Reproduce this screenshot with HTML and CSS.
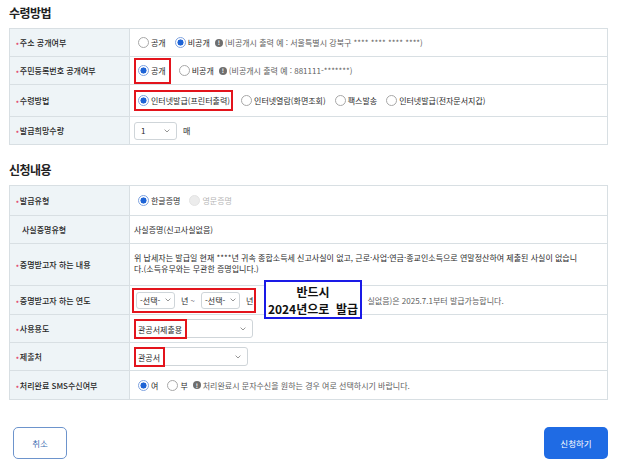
FILE: index.html
```html
<!DOCTYPE html>
<html lang="ko">
  <head>
    <meta charset="UTF-8" />
    <meta name="viewport" content="width=device-width, initial-scale=1.0" />
    <title>사실증명 신청</title>
    <link rel="stylesheet" href="styles.css">
  </head>
  <body>
    <div class="wrap">
      <!-- 수령방법 -->
      <h2 class="sec-title">수령방법</h2>
      <table class="form-table">
        <colgroup><col class="col-label"><col></colgroup>
        <tr class="r28">
          <th><span class="req">주소 공개여부</span></th>
          <td>
            <div class="cell">
              <label class="radio"><input type="radio" name="addr"> 공개</label>
              <label class="radio"><input type="radio" name="addr" checked> 비공개</label>
              <span class="hint"><i class="info">!</i>(비공개시 출력 예 : 서울특별시 강북구 **** **** **** ****)</span>
            </div>
          </td>
        </tr>
        <tr class="r28">
          <th><span class="req">주민등록번호 공개여부</span></th>
          <td>
            <div class="cell">
              <label class="radio mark-opt tall"><input type="radio" name="jumin" checked> 공개</label>
              <label class="radio"><input type="radio" name="jumin"> 비공개</label>
              <span class="hint"><i class="info">!</i>(비공개시 출력 예 : 881111-*******)</span>
            </div>
          </td>
        </tr>
        <tr class="r32">
          <th><span class="req">수령방법</span></th>
          <td>
            <div class="cell">
              <label class="radio mark-opt"><input type="radio" name="recv" checked> 인터넷발급(프린터출력)</label>
              <label class="radio"><input type="radio" name="recv"> 인터넷열람(화면조회)</label>
              <label class="radio"><input type="radio" name="recv"> 팩스발송</label>
              <label class="radio"><input type="radio" name="recv"> 인터넷발급(전자문서지갑)</label>
            </div>
          </td>
        </tr>
        <tr class="r28">
          <th><span class="req">발급희망수량</span></th>
          <td>
            <div class="cell">
              <span class="select w-qty"><span class="val">1</span><svg class="chev" width="6" height="4" viewBox="0 0 6 4"><path d="M0.6 0.6 L3 3 L5.4 0.6" fill="none" stroke="#8a8a8a" stroke-width="0.9"/></svg></span>
              <span class="unit">매</span>
            </div>
          </td>
        </tr>
      </table>

      <!-- 신청내용 -->
      <h2 class="sec-title next">신청내용</h2>
      <table class="form-table">
        <colgroup><col class="col-label"><col></colgroup>
        <tr class="r30">
          <th><span class="req">발급유형</span></th>
          <td>
            <div class="cell">
              <label class="radio"><input type="radio" name="lang" checked> 한글증명</label>
              <label class="radio off"><input type="radio" name="lang" disabled> 영문증명</label>
            </div>
          </td>
        </tr>
        <tr class="r28">
          <th><span class="plain">사실증명유형</span></th>
          <td><div class="cell">사실증명(신고사실없음)</div></td>
        </tr>
        <tr class="r42">
          <th><span class="req">증명받고자 하는 내용</span></th>
          <td>
            <p class="desc">위 납세자는 발급일 현재 ****년 귀속 종합소득세 신고사실이 없고, 근로·사업·연금·종교인소득으로 연말정산하여 제출된 사실이 없습니<br>다.(소득유무와는 무관한 증명입니다.)</p>
          </td>
        </tr>
        <tr class="r29">
          <th><span class="req">증명받고자 하는 연도</span></th>
          <td class="year-cell">
            <div class="cell">
              <span class="mark-group">
                <span class="select w-year"><span class="val">-선택-</span><svg class="chev" width="6" height="4" viewBox="0 0 6 4"><path d="M0.6 0.6 L3 3 L5.4 0.6" fill="none" stroke="#8a8a8a" stroke-width="0.9"/></svg></span>
                <span>년 ~</span>
                <span class="select w-year"><span class="val">-선택-</span><svg class="chev" width="6" height="4" viewBox="0 0 6 4"><path d="M0.6 0.6 L3 3 L5.4 0.6" fill="none" stroke="#8a8a8a" stroke-width="0.9"/></svg></span>
                <span>년</span>
              </span>
              <span class="hint year-hint">실없음)은 2025.7.1부터 발급가능합니다.</span>
            </div>
            <div class="note">반드시<br>2024년으로&nbsp; 발급</div>
          </td>
        </tr>
        <tr class="r28">
          <th><span class="req">사용용도</span></th>
          <td>
            <div class="cell">
              <span class="select w-use"><span class="val marked">관공서제출용</span><svg class="chev" width="6" height="4" viewBox="0 0 6 4"><path d="M0.6 0.6 L3 3 L5.4 0.6" fill="none" stroke="#8a8a8a" stroke-width="0.9"/></svg></span>
            </div>
          </td>
        </tr>
        <tr class="r28">
          <th><span class="req">제출처</span></th>
          <td>
            <div class="cell">
              <span class="select w-dest"><span class="val marked">관공서</span><svg class="chev" width="6" height="4" viewBox="0 0 6 4"><path d="M0.6 0.6 L3 3 L5.4 0.6" fill="none" stroke="#8a8a8a" stroke-width="0.9"/></svg></span>
            </div>
          </td>
        </tr>
        <tr class="r29">
          <th><span class="req">처리완료 SMS수신여부</span></th>
          <td>
            <div class="cell">
              <label class="radio"><input type="radio" name="sms" checked> 여</label>
              <label class="radio"><input type="radio" name="sms"> 부</label>
              <span class="hint"><i class="info">!</i>처리완료시 문자수신을 원하는 경우 여로 선택하시기 바랍니다.</span>
            </div>
          </td>
        </tr>
      </table>

      <!-- 버튼 -->
      <div class="btns">
        <button class="btn btn-cancel">취소</button>
        <button class="btn btn-submit">신청하기</button>
      </div>
    </div>
  </body>
</html>
```

FILE: styles.css
```css
/* 기본 */
body {
  margin: 0;
  background: #fff;
  color: #2a2a2a;
  font-family: "Noto Sans CJK KR", "Noto Sans", sans-serif;
  font-size: 8px;
}

.wrap {
  width: 599px;
  padding-left: 9px;
}

/* 섹션 제목 */
.sec-title {
  margin: 0;
  height: 28px;
  line-height: 26px;
  font-size: 12px;
  font-weight: 700;
  letter-spacing: -0.5px;
  color: #222;
}

.sec-title.next {
  margin-top: 12px;
}

/* 입력 표 */
.form-table {
  width: 100%;
  border-collapse: collapse;
  table-layout: fixed;
}

.form-table .col-label {
  width: 120px;
}

.form-table th,
.form-table td {
  border: 1px solid #d8dfe3;
  padding: 0;
}

.form-table th {
  background: #eef4f7;
  text-align: left;
  font-weight: 500;
  color: #262626;
  padding-left: 6px;
}

.form-table td {
  padding-left: 4px;
  background: #fff;
}

.r28 td { height: 27px; }
.r29 td { height: 28px; }
.r30 td { height: 29px; }
.r32 td { height: 31px; }
.r42 td { height: 41px; }

/* 필수 표시 */
.req::before {
  content: "•";
  color: #e2567a;
  margin-right: 1px;
}

.plain {
  padding-left: 6px;
}

.cell {
  display: flex;
  align-items: center;
}

/* 라디오 */
.radio {
  display: inline-flex;
  align-items: center;
  margin-left: 4px;
  margin-right: 5px;
  white-space: nowrap;
}

.radio input {
  appearance: none;
  width: 11px;
  height: 11px;
  margin: 0 2px 0 0;
  border: 1px solid #a8a8a8;
  border-radius: 50%;
  background: #fff;
  box-sizing: border-box;
}

.radio input:checked {
  border-color: #7fa3e0;
  background: radial-gradient(circle, #1d63d6 0 2.8px, #fff 3.3px);
}

.radio.off {
  color: #b5b5b5;
}

.radio.off input {
  background: #ececec;
  border-color: #e4e4e4;
}

/* 빨간 표시 박스 */
.mark-opt {
  margin-left: 0;
  margin-right: 4px;
  padding: 0 1px 0 2px;
  border: 2px solid #e3141c;
  height: 21px;
  box-sizing: border-box;
}

.mark-opt.tall {
  height: 26px;
  padding-right: 3px;
}

.mark-group {
  display: inline-flex;
  align-items: center;
  gap: 6px;
  margin-left: -2px;
  padding: 2px 1px 2px 2px;
  border: 2px solid #e3141c;
}

/* 안내 문구 */
.hint {
  display: inline-flex;
  align-items: center;
  color: #5e5e5e;
  white-space: nowrap;
}

.info {
  display: inline-flex;
  justify-content: center;
  align-items: center;
  width: 8px;
  height: 8px;
  margin-right: 2px;
  border-radius: 50%;
  background: #6e6e6e;
  color: #fff;
  font-size: 6px;
  font-style: normal;
  font-weight: 700;
}

.year-hint {
  margin-left: 111px;
}

/* 셀렉트 */
.select {
  display: inline-flex;
  align-items: center;
  height: 18px;
  padding: 0 6px 0 4px;
  border: 1px solid #cfd5d9;
  border-radius: 3px;
  background: #fff;
  box-sizing: border-box;
}

.select .chev {
  margin-left: auto;
}

.select .val.marked {
  align-self: stretch;
  display: inline-flex;
  align-items: center;
  margin: -1px 0 -2px -5px;
  padding: 0 3px 0 2px;
  border: 2px solid #e3141c;
}

.w-qty { width: 43px; padding-left: 6px; }
.w-year { width: 39px; height: 17px; padding: 0 3px 0 3px; }
.w-use { width: 119px; height: 19px; }
.w-dest { width: 114px; height: 19px; }

.unit {
  margin-left: 6px;
}

/* 내용 설명 */
.desc {
  margin: 0;
  line-height: 11.5px;
  padding-bottom: 3px;
}

/* 파란 메모 박스 */
.year-cell {
  position: relative;
}

.note {
  position: absolute;
  left: 134px;
  top: -6px;
  width: 98px;
  height: 39px;
  box-sizing: border-box;
  border: 2px solid #1a1ae6;
  background: #fff;
  color: #111;
  font-size: 12px;
  font-weight: 700;
  line-height: 17px;
  text-align: center;
  padding-top: 1px;
}

/* 버튼 */
.btns {
  display: flex;
  justify-content: space-between;
  margin-top: 27px;
  padding-left: 4px;
}

.btn {
  height: 32px;
  border-radius: 5px;
  font-family: inherit;
  font-size: 8.5px;
  cursor: pointer;
}

.btn-cancel {
  width: 54px;
  border: 1px solid #6d94cc;
  background: #fff;
  color: #3f6fb3;
}

.btn-submit {
  width: 64px;
  border: 0;
  background: #1f6be4;
  color: #fff;
}
```
